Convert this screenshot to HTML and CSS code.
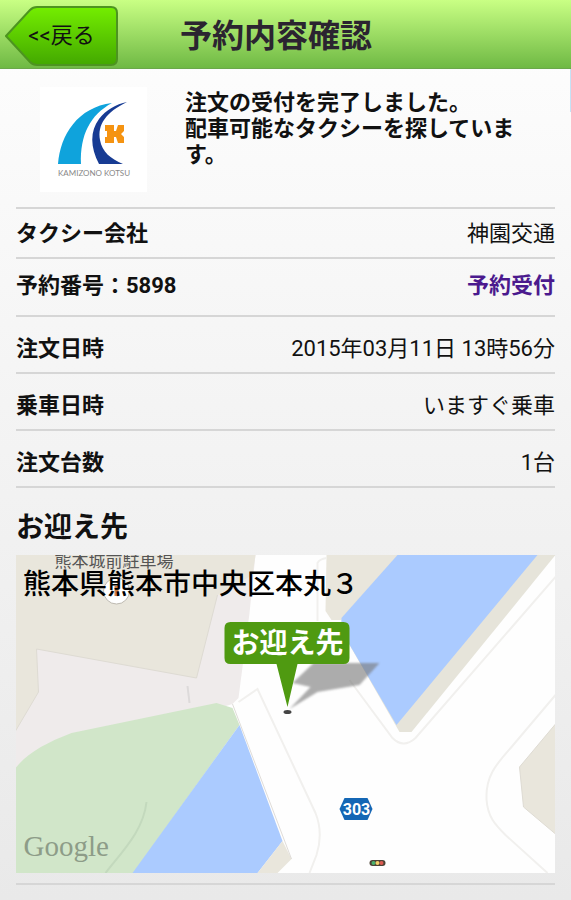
FILE: index.html
```html
<!DOCTYPE html>
<html lang="ja">
<head>
    <meta charset="UTF-8">
    <meta name="viewport" content="width=device-width, initial-scale=1.0">
    <title>予約内容確認</title>
    <link rel="stylesheet" href="styles.css">
</head>
<body>
    <header class="header">
        <button class="back-button" type="button">
            <svg class="back-shape" viewBox="0 0 113 60" aria-hidden="true">
                <defs>
                    <linearGradient id="backFill" x1="0" y1="0" x2="0" y2="1">
                        <stop offset="0" stop-color="#74ee00"/>
                        <stop offset="1" stop-color="#43a800"/>
                    </linearGradient>
                </defs>
                <path d="M1 30 L25 4 Q28 1 32 1 H106 Q112 1 112 7 V53 Q112 59 106 59 H32 Q28 59 25 56 Z" fill="url(#backFill)" stroke="#4d9420" stroke-width="2"/>
            </svg>
            <span class="back-text">&lt;&lt;戻る</span>
        </button>
        <h1 class="title">予約内容確認</h1>
    </header>

    <main class="content">
        <section class="notice">
            <svg class="logo" viewBox="0 0 107 105" role="img" aria-label="KAMIZONO KOTSU">
                <path d="M18 77 C20 48 38 20 72 16 C50 28 40 48 41 77 Z" fill="#0fa3dc"/>
                <path d="M87 15 C66 25 57 38 60 53 C62 65 71 72 83 77 H59 C50 60 50 44 59 32 C66 23 76 17 87 15 Z" fill="#173b93"/>
                <path d="M65 38 H74 V44 H76 L78 38 H84 V44 L81 47 L84 50 V56 H78 L76 50 H74 V56 H65 V50 H67 V44 H65 Z" fill="#f59311"/>
                <text class="logo-text" x="18" y="89">KAMIZONO KOTSU</text>
            </svg>
            <p class="message">注文の受付を完了しました。<br>配車可能なタクシーを探しています。</p>
        </section>

        <dl class="details">
            <div class="row company">
                <dt>タクシー会社</dt>
                <dd>神園交通</dd>
            </div>
            <div class="row number">
                <dt>予約番号：5898</dt>
                <dd><a class="status" href="#">予約受付</a></dd>
            </div>
            <div class="row">
                <dt>注文日時</dt>
                <dd>2015年03月11日 13時56分</dd>
            </div>
            <div class="row">
                <dt>乗車日時</dt>
                <dd>いますぐ乗車</dd>
            </div>
            <div class="row">
                <dt>注文台数</dt>
                <dd>1台</dd>
            </div>
        </dl>

        <h2 class="section-title">お迎え先</h2>
        <div class="map">
            <svg class="map-canvas" viewBox="0 0 540 318" preserveAspectRatio="xMidYMid slice">
                <defs>
                    <filter id="soft"><feGaussianBlur stdDeviation="1"/></filter>
                </defs>
                <rect width="540" height="318" fill="#fefefe"/>
                <!-- left side -->
                <path d="M0 0 H240 L234 58 L223 143 L217 149 L0 215 Z" fill="#efebeb"/>
                <path d="M0 0 H240 L237 20 L202 40 L181 123 L21 94 L23 137 L0 176 Z" fill="#e9e6dc"/>
                <path d="M202 40 L181 123 L21 94 L23 137 L0 176" fill="none" stroke="#dedbd3"/>
                <path d="M172 131 L174 148" stroke="#dddada" stroke-width="2"/>
                <!-- park -->
                <path d="M0 213 C12 198 30 188 56 178 L201 148 L217 153 L224 170 L118 318 H0 Z" fill="#d1e6c9"/>
                <path d="M131 247 C128 275 108 295 90 318" fill="none" stroke="#c3d9bd" stroke-width="2"/>
                <!-- moat -->
                <path d="M224 170 L267 286 L242 318 H117 Z" fill="#abcbff"/>
                <path d="M267 286 L276 304 L262 318 H242 Z" fill="#e9e6dc"/>
                <path d="M217 149 L276 304" fill="none" stroke="#dfdcd8"/>
                <path d="M311 0 H384 L326 65 L316 65 L310 56 Z" fill="#e9e6dc"/>
                <path d="M382 0 H540 L396 177 L384 177 L326 76 V62 Z" fill="#e6e4da"/>
                <path d="M382 0 H522 L381 170 L326 76 V63 Z" fill="#abcbff"/>
                <!-- kerbs -->
                <g fill="none" stroke="#f1f0ee" stroke-width="2">
                    <path d="M302 66 V8 Q304 4 311 3"/>
                    <path d="M223 147 L242 134 L300 258 Q308 278 301 300 L294 318"/>
                    <path d="M334 125 L377 183 Q388 194 400 183 L540 22"/>
                    <path d="M540 140 L496 192 C482 208 470 220 471 244 C472 262 480 270 490 280 L532 318"/>
                </g>
                <path d="M540 169 L504 212 L508 252 L540 279 Z" fill="#e9e6dc" stroke="#dedbd3"/>
                <!-- parking lot -->
                <circle cx="101" cy="36" r="13" fill="#fff" stroke="#bdb9b0"/>
                <rect x="99" y="31" width="4" height="10" fill="#d08048"/>
                <text class="place" x="39" y="12">熊本城前駐車場</text>
                <!-- route 303 -->
                <path d="M329 243 H352 L357 254 L352 265 H329 L324 254 Z" fill="#1467b5"/>
                <text class="route" x="341" y="260">303</text>
                <!-- traffic light -->
                <rect x="354" y="305" width="16" height="6" rx="3" fill="#4c4235"/>
                <circle cx="358" cy="308" r="2" fill="#49b06c"/>
                <circle cx="362" cy="308" r="2" fill="#f4d06a"/>
                <circle cx="366" cy="308" r="2" fill="#dc5a50"/>
                <!-- pin -->
                <path d="M274 154 L295 132 L277 128 L298 108 H364 L344 130 L302 137 Z" fill="#777" opacity=".6" filter="url(#soft)"/>
                <ellipse cx="272" cy="157" rx="4" ry="2" fill="#444"/>
                <path d="M215 67 H328 Q334 67 334 73 V103 Q334 109 328 109 H282 L272 152 L261 109 H215 Q209 109 209 103 V73 Q209 67 215 67 Z" fill="#4f9a11"/>
                <text class="pin" x="272" y="98">お迎え先</text>
                <text class="google" x="8" y="301">Google</text>
            </svg>
            <p class="address">熊本県熊本市中央区本丸３</p>
        </div>
    </main>
    <div class="scroll-thumb"></div>
</body>
</html>
```
FILE: styles.css
```css
* {
    box-sizing: border-box;
}
body {
    position: relative;
    margin: 0;
    min-height: 100vh;
    font-family: Roboto, "Noto Sans CJK JP", sans-serif;
    font-size: 22px;
    line-height: 26px;
    color: #111;
    background: linear-gradient(#fefefe, #f4f4f4 45%, #e9e9e9);
}
.header {
    display: flex;
    align-items: center;
    height: 69px;
    padding: 3px 5px 0;
    background: linear-gradient(#c9ff84, #6fb944);
    border-bottom: 1px solid #6aa84a;
}
.back-button {
    position: relative;
    width: 113px;
    height: 60px;
    padding: 0;
    border: none;
    background: none;
    font: inherit;
    color: #111;
    cursor: pointer;
}
.back-shape {
    position: absolute;
    inset: 0;
}
.back-text {
    position: relative;
}
.title {
    flex: 1;
    margin: 0;
    padding-right: 132px;
    text-align: center;
    font-size: 32px;
    line-height: 40px;
    color: #2b2430;
}
.content {
    padding: 0 16px;
}
.notice {
    display: flex;
    gap: 38px;
    padding: 18px 24px 15px;
}
.logo {
    flex: none;
    width: 107px;
    height: 105px;
    background: #fff;
}
.logo-text {
    font-family: Lato, sans-serif;
    font-size: 8px;
    fill: #888;
}
.message {
    margin: 3px 0 0;
    font-weight: bold;
}
.details {
    margin: 0;
    border-top: 2px solid #d6d6d6;
}
.row {
    display: flex;
    justify-content: space-between;
    padding: 19px 0 10px;
    border-bottom: 2px solid #d6d6d6;
}
.company {
    padding: 12px 0 10px;
}
.number {
    padding: 14px 0 16px;
}
dt {
    font-weight: bold;
}
dd {
    margin: 0;
}
.status {
    color: #4b1a8e;
    font-weight: bold;
    text-decoration: none;
}
.section-title {
    margin: 22px 0 9px;
    font-size: 28px;
    line-height: 36px;
}
.map {
    position: relative;
}
.map::after {
    content: "";
    display: block;
    margin-top: 10px;
    border-bottom: 2px solid #d6d6d6;
}
.map-canvas {
    display: block;
    width: 100%;
    height: 318px;
}
.address {
    position: absolute;
    top: 12px;
    left: 7px;
    margin: 0;
    font-size: 28px;
    line-height: 36px;
    font-weight: 500;
    color: #000;
}
.place {
    font-size: 17px;
    fill: #555;
}
.route {
    font-size: 16px;
    font-weight: bold;
    text-anchor: middle;
    fill: #fff;
}
.pin {
    font-size: 28px;
    font-weight: bold;
    text-anchor: middle;
    fill: #fff;
}
.google {
    font-family: "Liberation Serif", serif;
    font-size: 29px;
    fill: #8d9c88;
}
.scroll-thumb {
    position: absolute;
    top: 69px;
    right: 0;
    width: 1px;
    height: 43px;
    background: #c5e2f5;
}
```
